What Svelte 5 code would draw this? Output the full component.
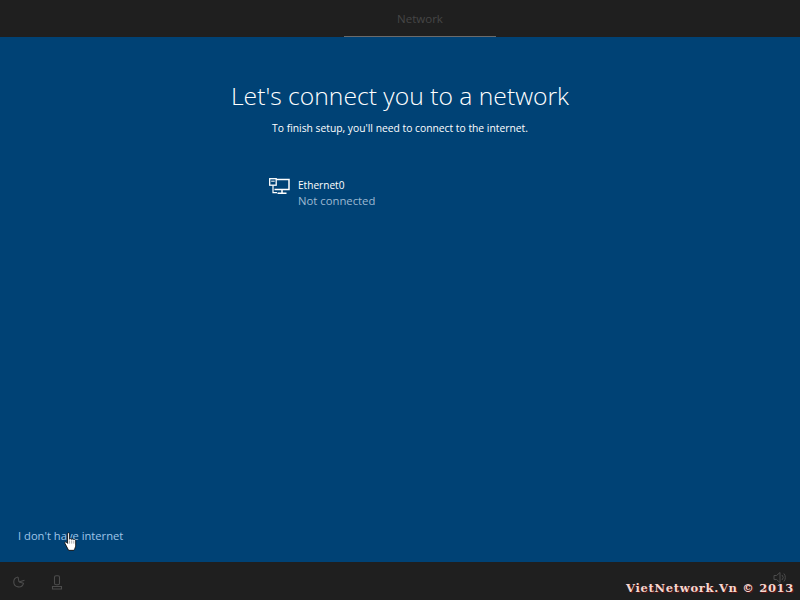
<script>
	const title = "Let's connect you to a network";
	const subtitle = "To finish setup, you'll need to connect to the internet.";
</script>

<div class="page">
	<header class="topbar">
		<div class="tab">Network</div>
	</header>

	<main class="content">
		<h1>{title}</h1>
		<p class="sub">{subtitle}</p>

		<div class="network">
			<!-- wired network icon -->
			<svg class="net-icon" width="21" height="17" viewBox="0 0 21 17" fill="none" stroke="#fff" stroke-width="1.500">
				<path d="M7 1.500H20V11.500H5.500" />
				<path d="M13 11.500V15M8.500 15.300H17.500" />
				<rect x="0.700" y="0.700" width="6.500" height="6.500" fill="#004275" stroke-width="1.300" />
				<path d="M2.200 3.200H5.700" stroke-width="1" />
				<path d="M4 7.200V14.600H8" stroke-width="1.200" />
			</svg>
			<div class="net-text">
				<div class="net-name">Ethernet0</div>
				<div class="net-state">Not connected</div>
			</div>
		</div>

		<div class="skip-wrap">
			<span class="skip">I don't have internet</span>
			<!-- hand pointer -->
			<svg class="cursor" width="14" height="19" viewBox="0 0 14 18" preserveAspectRatio="none">
				<path d="M3.600 1.600c0-1.300 2-1.300 2 0v5.200c.4-.7 1.900-.7 2.100.2.500-.6 1.900-.5 2.100.4.600-.5 1.900-.2 1.900.9v4.200c0 2-1.200 3.900-1.800 4.900H4.600L1 10.900c-.7-1 .5-2.100 1.400-1.300l1.200 1.200z" fill="#fff" stroke="#111" stroke-width="0.900" />
				<path d="M5.600 8v3M7.700 8v3M9.800 8.500v2.500" stroke="#777" stroke-width="0.600" fill="none" />
			</svg>
		</div>
	</main>

	<footer class="bottombar">
		<div class="foot-icons">
			<!-- ease of access -->
			<svg width="14" height="14" viewBox="0 0 14 14" fill="none" stroke="#4c4c4c" stroke-width="1.100">
				<path d="M6 2a5 5 0 1 0 5.600 6.200" />
				<path d="M7 7 12.500 5.200M7 7 6 2M7 7l4.600 1.200" />
			</svg>
			<!-- microphone -->
			<svg width="14" height="15" viewBox="0 0 14 15" fill="none" stroke="#4c4c4c" stroke-width="1.100">
				<rect x="4.500" y="0.800" width="5" height="9" rx="1.500" />
				<path d="M2.500 11.500h9v2.500h-9z" />
			</svg>
		</div>
		<div class="foot-right">
			<!-- speaker -->
			<svg class="speaker" width="13" height="13" viewBox="0 0 13 13" fill="none" stroke="#4c4c4c" stroke-width="1">
				<path d="M1 4.500h2.500L7 1.500v10L3.500 8.500H1z" />
				<path d="M9 4a3.500 3.500 0 0 1 0 5M10.800 2.500a6 6 0 0 1 0 8" />
			</svg>
			<span class="brand">VietNetwork.Vn © 2013</span>
		</div>
	</footer>
</div>

<style>
	:global(body) {
		margin: 0;
	}

	.page {
		width: 800px;
		height: 600px;
		display: flex;
		flex-direction: column;
		background: #004275;
		font-family: "Open Sans", "Noto Sans", "Liberation Sans", sans-serif;
		overflow: hidden;
	}

	.topbar {
		height: 37px;
		flex: none;
		background: #1f1f1f;
		display: flex;
		justify-content: center;
		padding-left: 40px;
	}

	.tab {
		width: 152px;
		height: 36px;
		border-bottom: 1px solid #6b6b6b;
		text-align: center;
		font-size: 11.500px;
		line-height: 38px;
		color: #464646;
	}

	.content {
		flex: 1;
		display: flex;
		flex-direction: column;
		align-items: center;
		padding-top: 40px;
		min-height: 0;
	}

	h1 {
		margin: 0;
		font-size: 24.700px;
		font-weight: 300;
		line-height: 38px;
		color: #fff;
	}

	.sub {
		margin: 5px 0 0;
		font-size: 10.300px;
		line-height: 16px;
		color: #fff;
	}

	.network {
		align-self: flex-start;
		margin: 42px 0 0 269px;
		display: flex;
		gap: 8px;
	}

	.net-name {
		font-size: 10.100px;
		line-height: 15px;
		color: #fff;
	}

	.net-state {
		font-size: 11.300px;
		line-height: 16px;
		color: #9db9d2;
	}

	.skip-wrap {
		align-self: flex-start;
		margin: auto 0 17px 18px;
		position: relative;
	}

	.skip {
		font-size: 11.200px;
		line-height: 16px;
		color: #9fc5e8;
	}

	.cursor {
		position: absolute;
		left: 46px;
		top: 9px;
	}

	.bottombar {
		height: 38px;
		flex: none;
		background: #1f1f1f;
		display: flex;
		justify-content: space-between;
		align-items: center;
	}

	.foot-icons {
		display: flex;
		align-items: center;
		gap: 24px;
		padding: 2px 0 0 12px;
	}

	.foot-right {
		position: relative;
		padding: 10px 6px 0 0;
	}

	.speaker {
		position: absolute;
		right: 14px;
		top: 6px;
	}

	.brand {
		position: relative;
		font-family: "DejaVu Serif", "Liberation Serif", serif;
		font-weight: 700;
		font-size: 11.500px;
		letter-spacing: 0.700px;
		color: #f5d7d0;
		text-shadow: 1px 1px 0 #5a1515;
	}
</style>
